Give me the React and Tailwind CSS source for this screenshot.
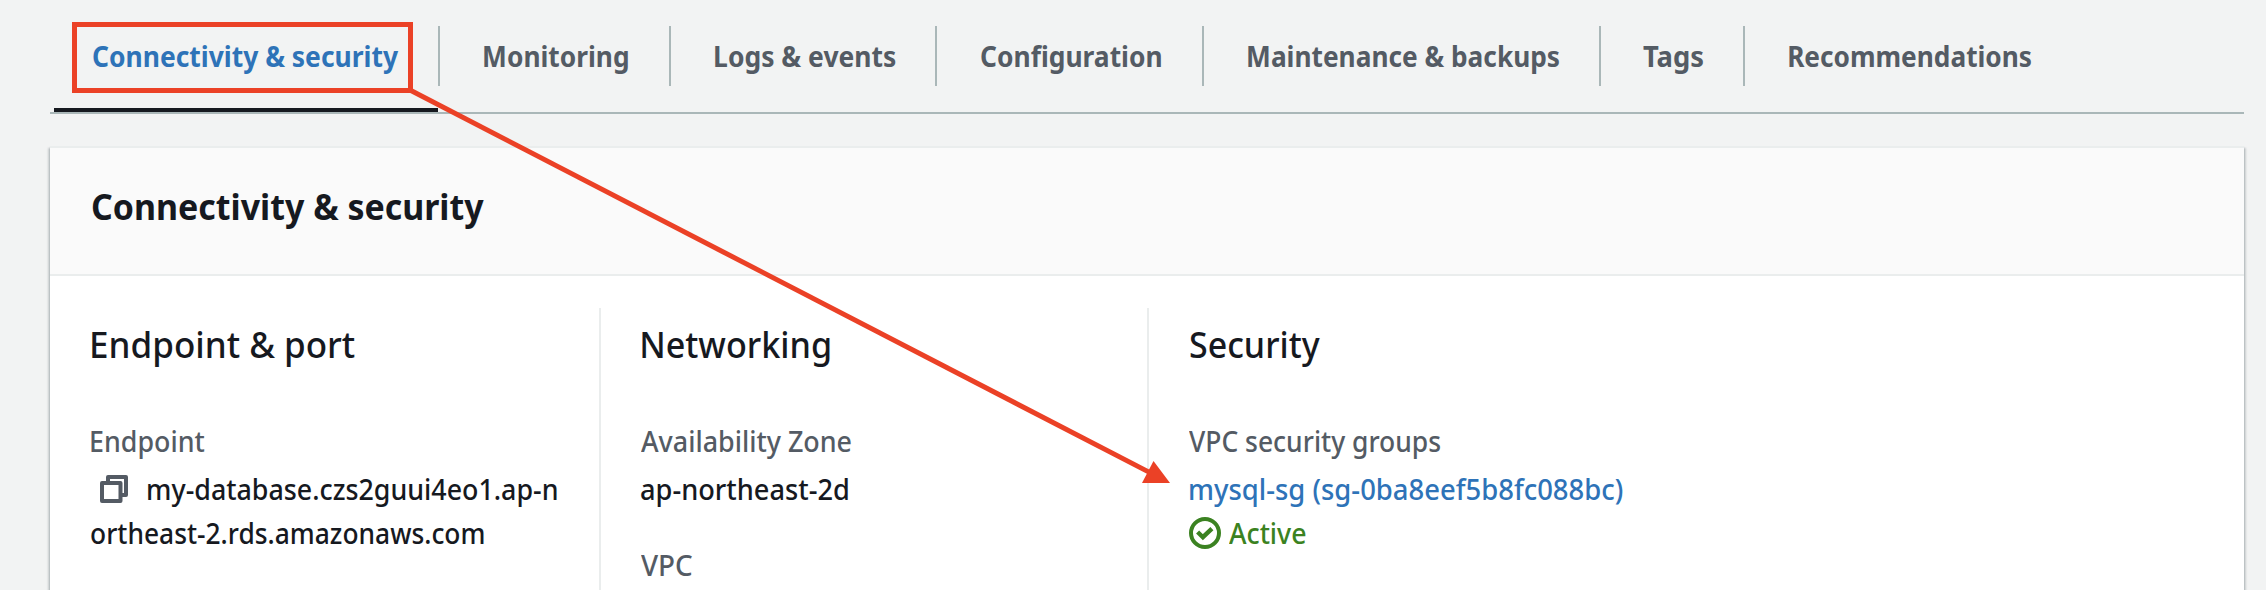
import { useLayoutEffect, useRef, useState } from "react";

// Draws one line of text so that its visible glyphs fill exactly `w` pixels.
function Fit({ w, children, className = "" }) {
  const ref = useRef(null);
  const [transform, setTransform] = useState("none");
  useLayoutEffect(() => {
    const cs = getComputedStyle(ref.current);
    const ctx = document.createElement("canvas").getContext("2d");
    ctx.font = `${cs.fontWeight} ${cs.fontSize} ${cs.fontFamily}`;
    const m = ctx.measureText(children);
    const s = w / (m.actualBoundingBoxLeft + m.actualBoundingBoxRight);
    setTransform(`translateX(${m.actualBoundingBoxLeft * s}px) scaleX(${s})`);
  }, [w, children]);
  return (
    <div className={`shrink-0 whitespace-nowrap ${className}`} style={{ width: w }}>
      <span ref={ref} className="inline-block origin-left" style={{ transform }}>
        {children}
      </span>
    </div>
  );
}

const tabs = [
  { label: "Connectivity & security", ink: 305, width: "w-[386px]", pad: "pl-[39px]", active: true },
  { label: "Monitoring", ink: 144, width: "w-[231px]", pad: "pl-[43.5px]" },
  { label: "Logs & events", ink: 180.3, width: "w-[266px]", pad: "pl-[43.7px]" },
  { label: "Configuration", ink: 180.5, width: "w-[267px]", pad: "pl-[43.5px]" },
  { label: "Maintenance & backups", ink: 311, width: "w-[397px]", pad: "pl-[43.5px]" },
  { label: "Tags", ink: 60, width: "w-[144px]", pad: "pl-[42px]" },
  { label: "Recommendations", ink: 242, width: "w-[300px]", pad: "pl-[43.5px]", last: true },
];

function Tab({ label, ink, width, pad, active, last }) {
  return (
    <div className={`flex h-full shrink-0 flex-col ${width}`}>
      <div className={`flex h-[60px] items-center border-[#aab7b8] pb-px ${pad} ${last ? "" : "border-r-2"}`}>
        <Fit w={ink} className={`text-[28px] leading-[44px] font-bold ${active ? "text-[#2e73b8]" : "text-[#545b64]"}`}>
          {label}
        </Fit>
      </div>
      {active && <div className="mt-auto mr-[2px] h-[4px] bg-[#16191f]" />}
    </div>
  );
}

function Heading({ w, children }) {
  return <Fit w={w} className="mb-[52px] ml-px text-[36px] leading-[44px] text-[#16191f]">{children}</Fit>;
}

function Label({ w, children }) {
  return <Fit w={w} className="mb-[4px] text-[#545b64]">{children}</Fit>;
}

function CopyIcon() {
  return (
    <svg width="32" height="32" viewBox="0 0 32 32" fill="none" stroke="#545b64" strokeWidth="4" strokeLinejoin="round">
      <rect x="4" y="10" width="18.5" height="18" />
      <path d="M10 10V4h18v18h-5" />
    </svg>
  );
}

function CheckIcon() {
  return (
    <svg width="32" height="32" viewBox="0 0 32 32" fill="none" stroke="#3b8221" strokeWidth="4">
      <circle cx="16" cy="16" r="14" />
      <path d="M8.6 15l5.3 5.2 9-8.6" strokeWidth="4.4" />
    </svg>
  );
}

export default function App() {
  return (
    <div className="relative flex h-[590px] w-[2266px] flex-col overflow-hidden bg-[#f2f3f3] pr-[22px] pl-[50px] font-['Noto_Sans',sans-serif] text-[28px] leading-[44px] font-medium">
      <nav className="mt-[26px] flex h-[88px] shrink-0 border-b-2 border-[#aab7b8] pl-[4px]">
        {tabs.map((t) => (
          <Tab key={t.label} {...t} />
        ))}
      </nav>

      <section className="mt-[32px] flex h-[500px] shrink-0 flex-col border-t-2 border-[#eaeded] bg-white shadow-[0_2px_2px_0_rgba(0,28,36,0.3),2px_2px_2px_0_rgba(0,28,36,0.15),-2px_2px_2px_0_rgba(0,28,36,0.15)]">
        <header className="h-[128px] shrink-0 border-b-2 border-[#eaeded] bg-[#fafafa] pt-[37px] pl-[41.5px]">
          <Fit w={392} className="text-[36px] leading-[44px] font-bold text-[#16191f]">Connectivity & security</Fit>
        </header>

        <div className="mt-[32px] flex flex-1 text-[#16191f]">
          <div className="w-[551px] border-r-2 border-[#eaeded] pt-[15px] pl-[41px]">
            <Heading w={262.5}>Endpoint & port</Heading>
            <Label w={114}>Endpoint</Label>
            <div className="flex items-center gap-[17.5px] pl-[7px]">
              <CopyIcon />
              <Fit w={409}>my-database.czs2guui4eo1.ap-n</Fit>
            </div>
            <Fit w={393}>ortheast-2.rds.amazonaws.com</Fit>
          </div>

          <div className="w-[548px] border-r-2 border-[#eaeded] pt-[15px] pl-[40px]">
            <Heading w={188}>Networking</Heading>
            <Label w={210}>Availability Zone</Label>
            <Fit w={207.5} className="mb-[32px]">ap-northeast-2d</Fit>
            <Label w={51}>VPC</Label>
          </div>

          <div className="flex-1 pt-[15px] pl-[40px]">
            <Heading w={130.5}>Security</Heading>
            <Label w={251.5}>VPC security groups</Label>
            <Fit w={432.5} className="ml-[0.5px] text-[#2e73b8]">mysql-sg (sg-0ba8eef5b8fc088bc)</Fit>
            <div className="flex items-center gap-[8px] text-[#3b8221]">
              <CheckIcon />
              <Fit w={76.5}>Active</Fit>
            </div>
          </div>
        </div>
      </section>

      <svg className="absolute top-0 left-0" width="2266" height="590" viewBox="0 0 2266 590" fill="none">
        <rect x="74.5" y="24.5" width="336" height="66" stroke="#eb4126" strokeWidth="5" />
        <path d="M408 89L1150 472.6" stroke="#eb4126" strokeWidth="5" />
        <path d="M1170 483H1142L1153.5 461Z" fill="#eb4126" />
      </svg>
    </div>
  );
}
